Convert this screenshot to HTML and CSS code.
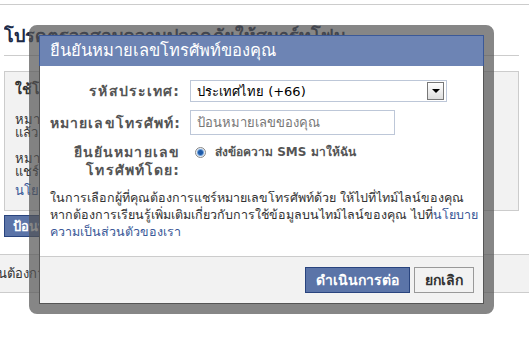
FILE: index.html
```html
<!DOCTYPE html>
<html lang="th">
<head>
    <meta charset="UTF-8">
    <title>ยืนยันหมายเลขโทรศัพท์</title>
    <link rel="stylesheet" href="styles.css">
</head>
<body>
    <div class="page">
        <div class="top-line"></div>
        <h2 class="page-title">โปรดตรวจสอบความปลอดภัยให้สมาร์ทโฟน</h2>
        <div class="info-box">
            <h3>ใช้โทรศัพท์มือถือของคุณ</h3>
            <p>หมายเลขโทรศัพท์มือถือของคุณจะช่วยให้คุณเข้าถึงบัญชีได้ง่ายขึ้นหากคุณลืมรหัส<br>แล้ว คุณจะได้รับการแจ้งเตือนทาง SMS</p>
            <p>หมายเลขของคุณจะแสดงบนไทม์ไลน์ของคุณ คุณสามารถเลือกผู้ที่ต้องการให้เห็นได้<br>แชร์หมายเลขได้ทุกเมื่อ<br><a href="#">นโยบายความเป็นส่วนตัว</a></p>
        </div>
        <button class="page-button">ป้อนหมายเลขโทรศัพท์</button>
        <div class="page-band">ฉันต้องการยืนยันบัญชีด้วยวิธีอื่น</div>
    </div>

    <div class="dialog-frame">
        <div class="dialog">
            <div class="dialog-title">ยืนยันหมายเลขโทรศัพท์ของคุณ</div>
            <div class="dialog-body">
                <div class="form-row">
                    <label class="form-label">รหัสประเทศ:</label>
                    <div class="select">
                        <span>ประเทศไทย (+66)</span>
                        <span class="select-arrow"></span>
                    </div>
                </div>
                <div class="form-row">
                    <label class="form-label">หมายเลขโทรศัพท์:</label>
                    <input type="text" class="phone-input" placeholder="ป้อนหมายเลขของคุณ">
                </div>
                <div class="form-row form-row-top">
                    <label class="form-label">ยืนยันหมายเลข<br>โทรศัพท์โดย:</label>
                    <div class="radio-option">
                        <span class="radio"></span>
                        <span>ส่งข้อความ SMS มาให้ฉัน</span>
                    </div>
                </div>
                <p class="note">ในการเลือกผู้ที่คุณต้องการแชร์หมายเลขโทรศัพท์ด้วย ให้ไปที่ไทม์ไลน์ของคุณ<br>หากต้องการเรียนรู้เพิ่มเติมเกี่ยวกับการใช้ข้อมูลบนไทม์ไลน์ของคุณ ไปที่<a href="#">นโยบาย<br>ความเป็นส่วนตัวของเรา</a></p>
            </div>
            <div class="dialog-footer">
                <button class="btn btn-confirm">ดำเนินการต่อ</button>
                <button class="btn btn-cancel">ยกเลิก</button>
            </div>
        </div>
    </div>
</body>
</html>
```

FILE: styles.css
```css
body {
    margin: 0;
    font-family: Tahoma, "DejaVu Sans", sans-serif;
    font-size: 12px;
    color: #333;
    background-color: #fff;
    overflow: hidden;
}

a {
    color: #3b5998;
    text-decoration: none;
}

.page {
    padding-top: 4px;
}

.top-line {
    border-top: 1px solid #ccc;
}

.page-title {
    margin: 20px 10px 0 4px;
    padding-bottom: 8px;
    font-size: 18px;
    line-height: 22px;
    color: #1c2a47;
    border-bottom: 1px solid #ccc;
    white-space: nowrap;
    overflow: hidden;
}

.info-box {
    margin: 15px 10px 0 4px;
    padding: 8px 10px;
    height: 122px;
    background-color: #f2f2f2;
    border: 1px solid #ccc;
    overflow: hidden;
}

.info-box h3 {
    margin: 0 0 15px;
    font-size: 14px;
    line-height: 18px;
}

.info-box p {
    margin: 0 0 13px;
    font-size: 13px;
    line-height: 13px;
    white-space: nowrap;
}

.info-box a {
    display: inline-block;
    margin-top: 6px;
}

.page-button {
    margin: 4px 0 0 4px;
    height: 22px;
    padding: 0 8px;
    background-color: #5b74a8;
    border: 1px solid #29447e;
    color: #fff;
    font-family: inherit;
    font-size: 13px;
    font-weight: bold;
}

.page-band {
    margin-top: 17px;
    height: 37px;
    line-height: 37px;
    background-color: #f2f2f2;
    border-top: 1px solid #ccc;
    border-bottom: 1px solid #ccc;
    font-size: 13px;
    text-indent: -11px;
    white-space: nowrap;
}

.dialog-frame {
    position: absolute;
    left: 29px;
    top: 25px;
    width: 445px;
    border: 10px solid rgba(82, 82, 82, 0.7);
    border-radius: 8px;
}

.dialog {
    background-color: #fff;
    border: 1px solid #555;
}

.dialog-title {
    height: 30px;
    line-height: 30px;
    padding: 0 10px;
    background-color: #6d84b4;
    border: 1px solid #3b5998;
    border-bottom: 0;
    margin: -1px -1px 0;
    color: #fff;
    font-size: 16.5px;
}

.dialog-body {
    padding: 14px 10px 16px;
}

.form-row {
    display: grid;
    grid-template-columns: 130px 1fr;
    column-gap: 10px;
    align-items: center;
    margin-bottom: 8px;
}

.form-row-top {
    align-items: start;
}

.form-label {
    text-align: right;
    font-size: 14px;
    font-weight: bold;
    letter-spacing: 1.1px;
    color: #555;
    line-height: 18px;
    white-space: nowrap;
}

.select {
    display: flex;
    align-items: center;
    justify-content: space-between;
    width: 247px;
    height: 20px;
    padding: 0 2px 0 6px;
    border: 1px solid #bdc7d8;
    color: #000;
    font-size: 13px;
}

.select-arrow {
    position: relative;
    width: 15px;
    height: 16px;
    background: linear-gradient(#fff, #ddd);
    border: 1px solid #777;
}

.select-arrow::after {
    content: "";
    position: absolute;
    left: 4px;
    top: 6px;
    border-left: 4px solid transparent;
    border-right: 4px solid transparent;
    border-top: 4px solid #000;
}

.phone-input {
    box-sizing: border-box;
    width: 205px;
    height: 25px;
    padding: 0 6px;
    border: 1px solid #bdc7d8;
    font-family: inherit;
    font-size: 13px;
}

.phone-input::placeholder {
    color: #777;
}

.radio-option {
    display: flex;
    align-items: center;
    gap: 9px;
    padding-left: 5px;
    font-weight: bold;
    color: #555;
    line-height: 18px;
}

.radio {
    width: 9px;
    height: 9px;
    border-radius: 50%;
    border: 1px solid #888;
    background: radial-gradient(circle, #1e5aa8 0 2px, #6fa0d8 3px, #e8eef5 4px);
}

.note {
    margin: 10px 0 0;
    font-size: 12.5px;
    line-height: 17px;
    color: #333;
    white-space: nowrap;
}

.dialog-footer {
    display: flex;
    justify-content: flex-end;
    gap: 4px;
    padding: 10px 9px;
    background-color: #f2f2f2;
    border-top: 1px solid #ccc;
}

.btn {
    height: 26px;
    padding: 0 10px;
    font-family: inherit;
    font-size: 14px;
    font-weight: bold;
}

.btn-confirm {
    background-color: #5b74a8;
    border: 1px solid #29447e;
    color: #fff;
}

.btn-cancel {
    background-color: #f2f2f2;
    border: 1px solid #999;
    color: #333;
}
```
